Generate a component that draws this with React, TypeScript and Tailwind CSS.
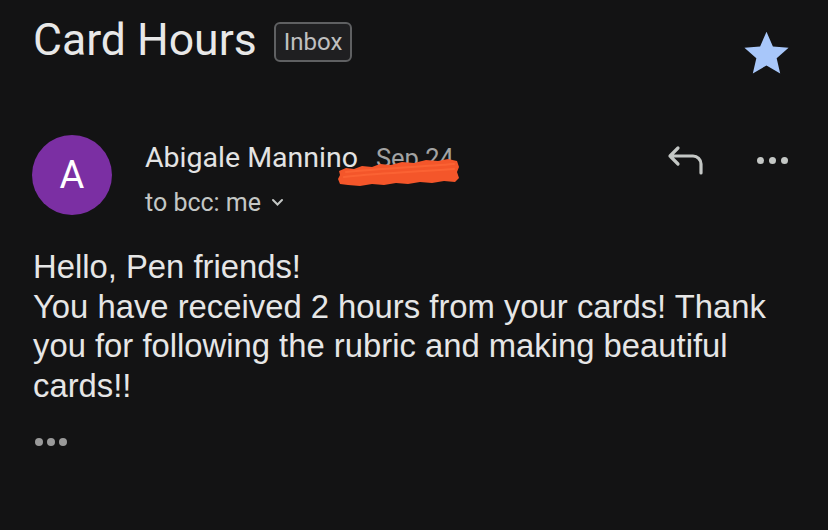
import React from 'react';

const sans = { fontFamily: 'Roboto, "Liberation Sans", sans-serif' };
const helv = { fontFamily: '"Liberation Sans", Arial, sans-serif' };

function Star() {
  return (
    <svg width="53" height="53" viewBox="0 0 24 24">
      <path
        d="M12 2.2l2.9 6.6 7.1.6-5.4 4.7 1.6 7-6.2-3.7-6.2 3.7 1.6-7L2 9.4l7.1-.6z"
        fill="#a8c7fa"
      />
    </svg>
  );
}

function ReplyIcon() {
  return (
    <svg width="38" height="30" viewBox="0 0 38 30" fill="none">
      <path
        d="M11 3 L3 11 L11 19 M3 11 H26 a8 8 0 0 1 8 8 V28"
        stroke="#c4c7c5"
        strokeWidth="3.2"
        strokeLinecap="round"
        strokeLinejoin="round"
      />
    </svg>
  );
}

function Dots({ size, color, gap }: { size: string; color: string; gap: string }) {
  return (
    <div className={`flex items-center ${gap}`}>
      <span className={`${size} rounded-full`} style={{ backgroundColor: color }} />
      <span className={`${size} rounded-full`} style={{ backgroundColor: color }} />
      <span className={`${size} rounded-full`} style={{ backgroundColor: color }} />
    </div>
  );
}

// redaction mark drawn over the date
function Scribble() {
  return (
    <svg width="126" height="32" viewBox="0 0 126 32" className="absolute left-[-40px] top-[16px]">
      <path
        d="M3 16 L10 13 L18 14 L26 11 L36 12 L44 9 L55 10 L66 7 L78 8 L90 5 L102 6 L112 4 L121 6 L123 12 L121 17 L123 23 L119 27 L108 26 L96 28 L84 27 L72 29 L60 28 L48 30 L36 29 L24 31 L12 30 L4 29 L2 24 L4 20 Z"
        fill="#f4562a"
      />
      <path
        d="M8 22 C30 19, 60 18, 118 14 M10 17 C40 14, 80 12, 118 9"
        stroke="#ff6a3a"
        strokeWidth="2"
        strokeLinecap="round"
        fill="none"
        opacity="0.6"
      />
    </svg>
  );
}

export default function App() {
  return (
    <div className="w-[828px] h-[530px] bg-[#131314] overflow-hidden text-[#e3e3e3]">
      {/* subject */}
      <div className="flex items-start justify-between pl-[33px] pr-[35px] pt-[16px]">
        <div className="flex items-center gap-[17px]">
          <h1 className="text-[44.5px] leading-[48px] text-[#e8e8e8]" style={sans}>
            Card Hours
          </h1>
          <span
            className="mt-[3px] px-[8px] h-[40px] flex items-center rounded-[6px] border-2 border-[#5f6062] bg-[#1f1f21] text-[24px] text-[#c0c0c0]"
            style={sans}
          >
            Inbox
          </span>
        </div>
        <div className="mt-[11px]">
          <Star />
        </div>
      </div>

      {/* sender */}
      <div className="flex items-start pl-[32px] pr-[40px] mt-[55px]">
        <div
          className="w-[80px] h-[80px] rounded-full bg-[#7b2fa3] flex items-center justify-center text-white text-[38px]"
          style={sans}
        >
          A
        </div>
        <div className="ml-[33px] flex-1 pt-[2px]">
          <div className="flex items-baseline gap-[18px]" style={sans}>
            <span className="text-[28.5px] text-[#e3e3e3]">Abigale Mannino</span>
            <span className="relative text-[25.5px] text-[#a3a3a3]">
              Sep 24
              <Scribble />
            </span>
          </div>
          <div className="flex items-center gap-[10px] mt-[4px] text-[25px] text-[#c4c7c5]" style={sans}>
            <span>to bcc: me</span>
            <svg width="13" height="9" viewBox="0 0 13 9" fill="none">
              <path d="M2 2 L6.5 6.5 L11 2" stroke="#c4c7c5" strokeWidth="2" strokeLinecap="round" />
            </svg>
          </div>
        </div>
        <div className="flex items-center gap-[52px] pt-[10px]">
          <ReplyIcon />
          <Dots size="w-[7px] h-[7px]" color="#c4c7c5" gap="gap-[5px]" />
        </div>
      </div>

      {/* body */}
      <div className="pl-[33px] pr-[36px] mt-[26px] text-[32.8px] leading-[39.5px] text-[#e6e6e6]" style={helv}>
        <p>Hello, Pen friends!</p>
        <p>You have received 2 hours from your cards! Thank you for following the rubric and making beautiful cards!!</p>
      </div>

      <div className="pl-[35px] mt-[33px]">
        <Dots size="w-[8px] h-[8px]" color="#9a9a9a" gap="gap-[4px]" />
      </div>
    </div>
  );
}
